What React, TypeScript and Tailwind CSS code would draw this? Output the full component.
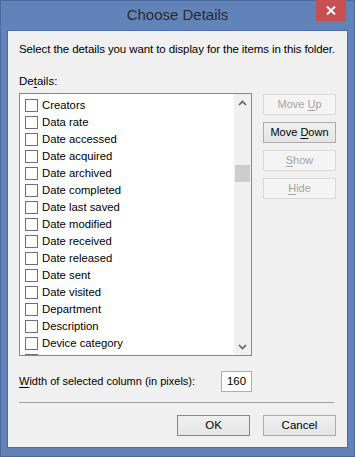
const FONT = { fontFamily: '"Liberation Sans", Arial, sans-serif' };

const details = [
  "Creators",
  "Data rate",
  "Date accessed",
  "Date acquired",
  "Date archived",
  "Date completed",
  "Date last saved",
  "Date modified",
  "Date received",
  "Date released",
  "Date sent",
  "Date visited",
  "Department",
  "Description",
  "Device category",
];

const SideButton = ({
  pre,
  key_,
  post,
  enabled,
}: {
  pre: string;
  key_: string;
  post: string;
  enabled?: boolean;
}) => (
  <div
    className={
      enabled
        ? "h-[21px] w-[73px] flex items-center justify-center border border-[#acacac] bg-gradient-to-b from-[#f0f0f0] to-[#e5e5e5] text-[11px] text-black"
        : "h-[21px] w-[73px] flex items-center justify-center border border-[#d9d9d9] bg-[#f4f4f4] text-[11px] text-[#a3a3a3]"
    }
  >
    <span className="whitespace-pre">
      {pre}
      <span className="underline underline-offset-2">{key_}</span>
      {post}
    </span>
  </div>
);

const Row = ({ label }: { label: string }) => (
  <div className="h-[17px] flex items-center pl-[5px] shrink-0">
    <div className="w-[13px] h-[13px] border border-[#707070] bg-white" />
    <span className="ml-[4px] text-[11.3px] text-black leading-none">{label}</span>
  </div>
);

export default function App() {
  return (
    <div
      className="w-[355px] h-[457px] bg-[#6183ba] flex flex-col border border-[#4a6aa0]"
      style={FONT}
    >
      <div className="relative h-[29px] shrink-0 flex items-center justify-center">
        <span className="text-[15px] text-[#2b2b2b] -mt-[1px]">Choose Details</span>
        <div className="absolute top-[-1px] right-[8px] w-[30px] h-[21px] bg-[#c75050] flex items-center justify-center">
          <svg width="10" height="9" viewBox="0 0 10 9">
            <path d="M1 0.5 L9 8.5 M9 0.5 L1 8.5" stroke="white" strokeWidth="2" />
          </svg>
        </div>
      </div>

      <div className="mx-[6px] h-[418px] shrink-0 bg-[#f0f0f0] border border-[#4b6ba3] flex flex-col px-[11px]">
        <div className="mt-[11px] text-[11.5px] text-black leading-[15px] whitespace-nowrap tracking-[-0.1px]">
          Select the details you want to display for the items in this folder.
        </div>
        <div className="mt-[17px] text-[11.5px] text-black leading-[15px]">
          De<span className="underline underline-offset-2">t</span>ails:
        </div>

        <div className="mt-[4px] flex">
          <div className="w-[233px] h-[263px] border border-[#828790] bg-white flex">
            <div className="flex-1 overflow-hidden pt-[3px] flex flex-col">
              {details.map((d) => (
                <Row key={d} label={d} />
              ))}
              <div className="h-[17px] flex items-center pl-[5px] shrink-0">
                <div className="w-[13px] h-[13px] border border-[#707070] bg-white" />
              </div>
            </div>
            <div className="w-[17px] bg-[#f0f0f0] flex flex-col">
              <div className="h-[17px] flex items-center justify-center">
                <svg width="9" height="6" viewBox="0 0 9 6">
                  <path d="M1 5 L4.5 1.5 L8 5" stroke="#606060" strokeWidth="1.6" fill="none" />
                </svg>
              </div>
              <div className="mt-[54px] mx-[1px] h-[17px] bg-[#cdcdcd]" />
              <div className="flex-1" />
              <div className="h-[17px] flex items-center justify-center">
                <svg width="9" height="6" viewBox="0 0 9 6">
                  <path d="M1 1 L4.5 4.5 L8 1" stroke="#606060" strokeWidth="1.6" fill="none" />
                </svg>
              </div>
            </div>
          </div>

          <div className="ml-[11px] flex flex-col gap-[7px] pt-[1px]">
            <SideButton pre="Move " key_="U" post="p" />
            <SideButton pre="Move " key_="D" post="own" enabled />
            <SideButton pre="" key_="S" post="how" />
            <SideButton pre="" key_="H" post="ide" />
          </div>
        </div>

        <div className="mt-[15px] flex items-center">
          <span className="text-[11px] text-black w-[202px] whitespace-nowrap">
            <span className="underline underline-offset-2">W</span>idth of selected column (in pixels):
          </span>
          <div className="w-[31px] h-[21px] border border-[#abadb3] bg-white flex items-center justify-center text-[11.5px] text-black">
            160
          </div>
        </div>

        <div className="mt-[10px] mr-[2px] h-px bg-[#a0a0a0]" />

        <div className="mt-[12px] flex justify-end gap-[13px]">
          <div className="w-[73px] h-[21px] border border-[#3399ff] bg-gradient-to-b from-[#f0f0f0] to-[#e5e5e5] flex items-center justify-center text-[11.5px] text-black">
            OK
          </div>
          <div className="w-[73px] h-[21px] border border-[#acacac] bg-gradient-to-b from-[#f0f0f0] to-[#e5e5e5] flex items-center justify-center text-[11.5px] text-black">
            Cancel
          </div>
        </div>
      </div>
    </div>
  );
}
